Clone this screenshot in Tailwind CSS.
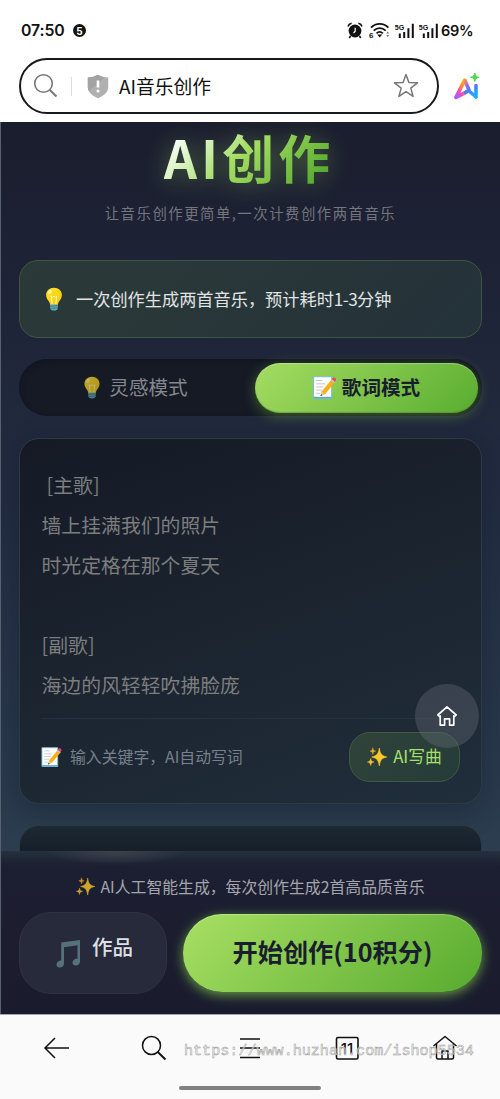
<!DOCTYPE html>
<html lang="zh-CN">
<head>
<meta charset="utf-8">
<meta name="viewport" content="width=device-width, initial-scale=1">
<title>AI音乐创作</title>
<script src="https://cdn.jsdelivr.net/npm/@tailwindcss/browser@4"></script>
</head>
<body class="h-[1099px] w-[500px] overflow-hidden bg-white font-['Noto_Sans_CJK_SC',sans-serif] whitespace-nowrap">
<svg class="absolute size-0" aria-hidden="true">
  <defs>
    <linearGradient id="bulbG" x1="0" y1="0" x2="1" y2="1"><stop offset="0" stop-color="#ffe52e"/><stop offset="1" stop-color="#f9c600"/></linearGradient>
    <linearGradient id="pencilG" x1="0" y1="0" x2="1" y2="1"><stop offset="0" stop-color="#ffca28"/><stop offset="1" stop-color="#f59300"/></linearGradient>
    <symbol id="bulb" viewBox="0 0 18 24">
      <path d="M9 .7C4.400.7 1.100 3.900 1.100 8.100c0 2.700 1.400 4.500 2.700 6.200.8 1.100 1.200 2.300 1.300 3.700h7.800c.1-1.400.5-2.600 1.300-3.700 1.300-1.700 2.700-3.500 2.700-6.200C16.900 3.900 13.600.7 9 .7z" fill="url(#bulbG)"/>
      <ellipse cx="5" cy="5" rx="1.500" ry="2.500" transform="rotate(35 5 5)" fill="#fff59a"/>
      <path d="M7.200 17 6.200 9l1.500 1.300L9 9l1.300 1.300L11.800 9l-1 8" fill="none" stroke="#fff7c0" stroke-width="1"/>
      <path d="M5.100 17.500h7.800v3.400c0 1.700-1.700 2.600-3.900 2.600s-3.900-.9-3.900-2.600z" fill="#64a6b8"/>
      <path d="M5.100 19.300l7.800-.8M5.300 21.500l7.500-.9" stroke="#2f7889" stroke-width=".8"/>
    </symbol>
    <symbol id="memo" viewBox="0 0 22 22">
      <path d="M.5.800h17.300v20.700H.5z" fill="#fff" stroke="#82bdd8" stroke-width="1"/>
      <path d="M.5 20.700h17.300" stroke="#5da9cf" stroke-width="1.600"/>
      <path d="M3 4.300h6M3 7.500h8.500M3 10.500h7M3 13.500h6M3 16.500h4" stroke="#b7bcc0" stroke-width=".8"/>
      <path d="M7.200 19.200 8.300 14.800 17.600 3.500l3.200 2.700L11.400 17.400z" fill="url(#pencilG)"/>
      <path d="M7.200 19.200 8.300 14.800l3.100 2.600z" fill="#efc995"/><path d="M7.200 19.200l.5-1.900 1.300 1.100z" fill="#333"/>
      <path d="M17.100 4.100l3.200 2.700 1-1.200-3.200-2.700z" fill="#b6c7cf"/>
      <path d="M18.100 2.900l.7-.9c.7-.8 1.700-.8 2.500-.1.800.7.9 1.800.3 2.600l-.8 1z" fill="#f0445c"/>
    </symbol>
    <symbol id="sparkles" viewBox="0 0 20 20">
      <path d="M12.300 1c.9 5.600 2 7.700 7.500 9-5.500 1.300-6.600 3.400-7.500 9-.9-5.600-2-7.700-7.500-9 5.500-1.300 6.600-3.400 7.500-9z" fill="#fdc82c" stroke="#fdc82c" stroke-width=".6"/>
      <path d="M5.800.8c.3 2.200.8 2.900 2.800 3.300C6.600 4.500 6.100 5.200 5.800 7.400 5.500 5.200 5 4.500 3 4.100 5 3.700 5.500 3 5.800.8z" fill="#f7a91c" stroke="#f7a91c" stroke-width=".5"/>
      <path d="M3.700 11.500c.4 2.400 1 3 3.300 3.500-2.300.5-2.900 1.100-3.300 3.500C3.300 16.100 2.700 15.500.4 15c2.300-.5 2.900-1.100 3.300-3.500z" fill="#fdc02a" stroke="#fdc02a" stroke-width=".5"/>
    </symbol>
    <symbol id="signal" viewBox="0 0 20 16">
      <path d="M4.800 15v-4.500M9.200 15V9M13.400 15V5.200M17.800 15V.800" stroke="#111" stroke-width="2" fill="none"/>
      <text x="-.3" y="7" font-size="8" font-weight="700" font-family="Liberation Sans" textLength="9.500" lengthAdjust="spacingAndGlyphs" fill="#111">5G</text>
    </symbol>
  </defs>
</svg>

<header class="h-[122px]">
  <div class="flex h-[58px] items-center pl-[21px] pr-[27px] pt-[3px] font-['Inter',sans-serif] text-[#111]">
    <span class="w-[44px] text-[15.800px] font-semibold tracking-[-0.1px]">07:50</span>
    <span class="ml-[8px] flex size-[13px] items-center justify-center rounded-full bg-[#111] text-[10px] font-bold leading-none text-white">5</span>
    <svg class="ml-auto" width="16" height="17" viewBox="0 0 16 17"><circle cx="8" cy="9" r="6.400" fill="#111"/><path d="M1 4.500C1.500 2.700 2.800 1.700 4.600 1.300M15 4.500c-.5-1.800-1.800-2.800-3.600-3.200M3.500 14l-1.200 2M12.500 14l1.200 2" stroke="#111" stroke-width="1.600" fill="none"/><path d="M8.200 5.800v3.400L6.500 11" stroke="#fff" stroke-width="1.200" fill="none"/></svg>
    <svg class="ml-[6px]" width="21" height="17" viewBox="0 0 21 17"><path d="M2 5.700c5-5 12.400-5 17.400 0M4.700 8.700c3.500-3.400 8.500-3.400 12 0M7.500 11.400c1.900-1.800 4.500-1.800 6.400 0" fill="none" stroke="#111" stroke-width="1.800"/><path d="M8.200 12.500h5L10.700 15.500z" fill="#111"/><path d="M17.200 11.500 18.700 9.500l1.500 2zM17.200 13 18.700 15l1.500-2z" fill="#777"/><text x="0" y="16" font-size="8" font-weight="700" font-family="Liberation Sans" fill="#111">6</text></svg>
    <svg class="ml-[5px]" width="20" height="16"><use href="#signal"/></svg>
    <svg class="ml-[4.500px]" width="20" height="16"><use href="#signal"/></svg>
    <span class="ml-[2px] w-[32px] pt-[1px] text-[14.500px] font-semibold tracking-[-0.3px]">69%</span>
  </div>
  <div class="flex items-center pl-[19px]">
    <div class="flex h-[56px] w-[420px] items-center rounded-full border-2 border-[#18191c] bg-white pl-[12px] pr-[18px]">
      <svg width="26" height="26" viewBox="0 0 26 26" fill="none" stroke="#777" stroke-width="1.600"><circle cx="10.500" cy="10.500" r="8.800"/><path d="M16.800 17l6.700 6.500" stroke-width="2"/></svg>
      <span class="ml-[12px] h-[19px] w-px bg-[#ddd]"></span>
      <svg class="ml-[15px]" width="22" height="25" viewBox="0 0 22 25"><path d="M11 .8C8 2.500 4.800 3.300.8 3.500v9.800c0 5 4.500 8.700 10.200 11 5.700-2.300 10.200-6 10.200-11V3.500C17.200 3.300 14 2.500 11 .8z" fill="#b0b0b0"/><path d="M11 .8C8 2.500 4.800 3.300.8 3.500v9.800c0 1.500.4 2.700 1 4L18 3.300c-2.500-.3-4.900-1.200-7-2.500z" fill="#a3a3a3"/><path d="M11 6.500v7" stroke="#fff" stroke-width="2.600"/><circle cx="11" cy="17" r="1.500" fill="#fff"/></svg>
      <span class="ml-[10px] text-[18.800px] leading-[28px] text-[#111]">AI音乐创作</span>
      <svg class="ml-auto" width="26" height="26" viewBox="0 0 26 26" fill="none" stroke="#777" stroke-width="1.500" stroke-linejoin="round"><path d="M13 1.500l2.900 8 8.600.3-6.700 5.300 2.300 8.300L13 18.700l-7.100 4.700 2.300-8.300L1.500 9.800l8.600-.3z"/></svg>
    </div>
    <svg class="ml-[14px]" width="28" height="28" viewBox="0 0 28 28"><defs><linearGradient id="aiA" x1="0" y1="1" x2=".7" y2="0"><stop offset="0" stop-color="#a45cff"/><stop offset=".4" stop-color="#e94fc0"/><stop offset=".75" stop-color="#ff8a2b"/><stop offset="1" stop-color="#ffb21e"/></linearGradient><linearGradient id="aiB" gradientUnits="userSpaceOnUse" x1="12" y1="7" x2="20" y2="23"><stop offset="0" stop-color="#ff9e24"/><stop offset=".35" stop-color="#b066d8"/><stop offset=".65" stop-color="#497bff"/><stop offset="1" stop-color="#20aaff"/></linearGradient></defs><path d="M12.500 20.500 3 25.300 11.500 8.500" fill="none" stroke="url(#aiA)" stroke-width="3.800" stroke-linejoin="round" stroke-linecap="round"/><path d="M12 8.500 16 18M12.500 20.500l3-2L23 25V13.500" fill="none" stroke="url(#aiB)" stroke-width="3.600" stroke-linejoin="round" stroke-linecap="round"/><path d="M21.800 1c.6 3 1.300 3.700 4.300 4.300-3 .6-3.700 1.300-4.300 4.300-.6-3-1.300-3.700-4.300-4.300 3-.6 3.700-1.300 4.300-4.300z" fill="#45d94d" stroke="#45d94d"/></svg>
  </div>
</header>

<main class="relative flex h-[892px] flex-col border-l border-[#586170] bg-linear-to-b from-[#1a1d2e] via-[#222b40] via-40% to-[#2c3e50] to-83%">
  <section class="h-[729px] overflow-hidden pl-[18px] pr-[18px]">
    <h1 class="mt-[5px] flex h-[62px] justify-center text-[52px] leading-[60px] font-bold drop-shadow-[0_2px_12px_rgba(160,220,90,0.400)]"><span class="h-[72px] bg-linear-135 from-white from-8% via-[#a4de62] via-42% to-[#56ab2f] to-85% bg-clip-text pr-[3px] tracking-[4px] text-transparent">AI创作</span></h1>
    <p class="mt-[13.500px] text-center text-[14.400px] leading-[20px] tracking-[1.500px] text-[#73757f]">让音乐创作更简单,一次计费创作两首音乐</p>
    <div class="mt-[37.500px] flex h-[78px] items-center rounded-[19px] border border-[#405445] bg-linear-135 from-[#2b3a37] to-[#24323a] pl-[24px] text-[17.200px] text-[#e1e4e5]">
      <svg class="mr-[12px]" width="20" height="24"><use href="#bulb"/></svg><span class="-mt-px">一次创作生成两首音乐，预计耗时<span class="tracking-[-0.6px]">1-3</span>分钟</span>
    </div>
    <div class="mt-[21px] flex h-[57px] items-center rounded-full bg-[#151a25] px-[4px] text-[19.600px] shadow-[inset_0_2px_5px_#10141e]">
      <div class="flex h-[50px] flex-1 items-center justify-center pr-[8px] text-[#85878f]"><svg class="mr-[7px] opacity-70" width="20" height="23"><use href="#bulb"/></svg><span class="-mt-px">灵感模式</span></div>
      <div class="flex h-[50px] w-[223px] items-center justify-center rounded-full bg-linear-135 from-[#a4dd62] to-[#58ad30] font-bold text-[#1a1d2e] shadow-[0_3px_13px_rgba(130,200,65,0.400),inset_0_1px_1px_rgba(255,255,255,0.300),inset_0_-1px_1px_rgba(80,130,30,0.500)]"><svg class="mr-[6px]" width="23" height="23"><use href="#memo"/></svg><span class="-mt-px">歌词模式</span></div>
    </div>
    <div class="mt-[22px] h-[366px] rounded-[20px] border border-[#2d3a43] bg-linear-160 from-[#151a25] via-[#1b242f] to-[#202e3b] px-[21px] shadow-[0_8px_28px_rgba(10,18,30,0.330)]">
      <div class="h-[280px] border-b border-[#26323d] pt-[26px] pl-[0.500px] text-[19.850px] leading-[40px] text-[#7c7d7f]">
        <p class="pl-[5px]">[主歌]</p>
        <p>墙上挂满我们的照片</p>
        <p>时光定格在那个夏天</p>
        <p class="h-[40px]"></p>
        <p>[副歌]</p>
        <p>海边的风轻轻吹拂脸庞</p>
      </div>
      <div class="mt-[13px] flex h-[50px] items-center justify-between text-[15.850px] text-[#78818a]">
        <div class="flex items-center"><svg class="mr-[8px]" width="21" height="20"><use href="#memo"/></svg>输入关键字，AI自动写词</div>
        <div class="flex h-[50px] w-[111px] items-center justify-center rounded-[21px] border border-[#3e5a41] bg-linear-135 from-[#30443b] to-[#253b39] text-[16.800px] text-[#a5e068]"><svg class="mr-[6px]" width="20" height="20"><use href="#sparkles"/></svg>AI写曲</div>
      </div>
    </div>
    <div class="mt-[21px] h-[80px] rounded-[20px] border border-[#2d3a43] bg-linear-to-b from-[#1d2832] to-[#17202a] to-30%"></div>
  </section>

  <section class="relative h-[163px] bg-linear-to-b from-[#24313f] from-0% via-[#1c1f31] via-9% to-[#1a1c2e] px-[18px]">
    <div class="absolute top-0 left-[45px] h-[14px] w-[140px] bg-radial-[ellipse_at_top] from-[#3c434b] to-transparent to-70%"></div>
    <div class="flex h-[61px] items-center justify-center pt-[10px] text-[15.850px] text-[#a4a5ac]"><svg class="mr-[5px] opacity-80" width="19" height="19"><use href="#sparkles"/></svg>AI人工智能生成，每次创作生成2首高品质音乐</div>
    <div class="flex items-center gap-[16px]">
      <div class="flex h-[82px] w-[148px] items-center rounded-[32px] border border-[#303243] bg-[#272a3a] pl-[36px] text-[20.500px] font-medium text-[#dfe0e3]">
        <svg width="25" height="29" viewBox="0 0 25 29" fill="#56717d"><path d="M5.200 3.500 24 1v21.500c0 2.500-2 4-4.300 4-2 0-3.200-1.300-3.200-3 0-2.300 2.200-4 5-4V6.300L8 8.200v16.200c0 2.500-2 4-4.300 4-2 0-3.200-1.300-3.200-3 0-2.300 2.100-4 4.700-4z"/></svg>
        <span class="ml-[11px] mb-[13px]">作品</span>
      </div>
      <div class="flex h-[78px] w-[299px] items-center justify-center rounded-full bg-linear-135 from-[#a8e063] to-[#56ab2f] text-[25.200px] font-bold text-[#1a1d2e] shadow-[0_3px_12px_rgba(145,220,80,0.650),inset_0_1px_1px_rgba(255,255,255,0.300)]"><span class="-mt-[2px]">开始创作(10积分)</span></div>
    </div>
  </section>

  <div class="absolute top-[562px] left-[414px] flex size-[64px] items-center justify-center rounded-full bg-[#7a7a88]/30">
    <svg width="22" height="22" viewBox="0 0 22 22" fill="none" stroke="#fff" stroke-width="1.700" stroke-linejoin="round"><path d="M1.800 10 11 1.800 20.200 10l-1.600 1.500-.8-.6v9.200h-4.200v-6.300H8.600v6.300H4.200v-9.200l-.8.600z"/></svg>
  </div>
</main>

<footer class="relative h-[85px] border-t border-[#a4a6ae] bg-[#fafafa]">
  <div class="flex h-[65px] items-center pl-[43px] text-[#111]">
    <svg width="27" height="26" viewBox="0 0 27 26" fill="none" stroke="currentColor" stroke-width="1.500"><path d="M26 13H2M12 3 2 13l10 10"/></svg>
    <svg class="ml-[71px]" width="27" height="26" viewBox="0 0 27 26" fill="none" stroke="currentColor" stroke-width="1.500"><circle cx="10.500" cy="10.500" r="9"/><path d="M16.800 17l7.700 7.500" stroke-width="1.900"/></svg>
    <svg class="ml-[70px]" width="24" height="26" viewBox="0 0 24 26" fill="none" stroke="currentColor" stroke-width="1.500"><path d="M2 4h20M2 13h20M2 22.500h20"/></svg>
    <svg class="ml-[73px]" width="25" height="26" viewBox="0 0 25 26"><rect x="1.500" y="2.500" width="21.500" height="21.500" rx="1.500" fill="none" stroke="currentColor" stroke-width="1.600"/><text x="12" y="18.700" font-size="15" font-weight="500" font-family="Inter" text-anchor="middle" fill="currentColor">11</text></svg>
    <svg class="ml-[72px]" width="26" height="26" viewBox="0 0 26 26" fill="none" stroke="currentColor" stroke-width="1.500" stroke-linejoin="round"><path d="M1.500 11 13 1.500 24.500 11M4.500 9v13.500c0 .9.500 1.500 1.500 1.500h14c1 0 1.500-.6 1.500-1.500V9M10 24v-8h6v8"/></svg>
  </div>
  <div class="mx-auto mt-[6px] h-[4px] w-[142px] rounded-full bg-[#7f7f7f]"></div>
  <div class="absolute top-[25px] left-[184px] font-['Liberation_Mono',monospace] text-[15.100px] leading-[22px] text-[#f5f5f5]/70 [-webkit-text-stroke:0.500px_#999]">https://www.huzhan.com/ishop5534</div>
</footer>
</body>
</html>
